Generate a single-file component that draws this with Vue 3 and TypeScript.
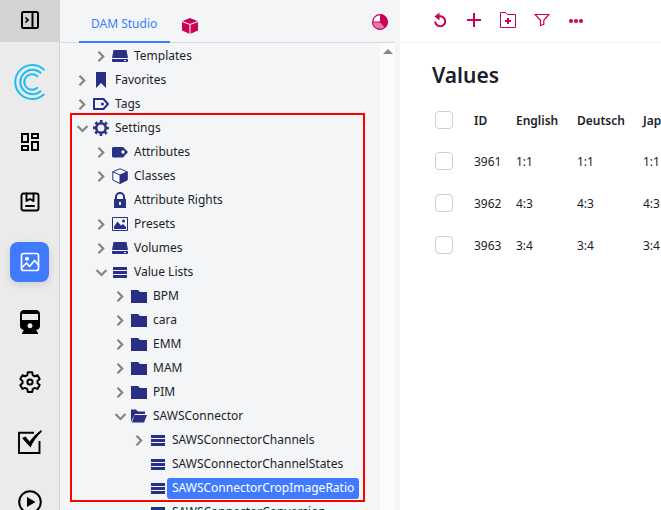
<script setup lang="ts">
import { ref } from 'vue'

interface TreeNode {
  label: string
  level: number
  icon: string
  state: 'open' | 'closed' | 'leaf'
}

const nodes: TreeNode[] = [
  { label: 'Templates', level: 1, icon: 'drive', state: 'closed' },
  { label: 'Favorites', level: 0, icon: 'bookmark', state: 'closed' },
  { label: 'Tags', level: 0, icon: 'tag', state: 'closed' },
  { label: 'Settings', level: 0, icon: 'gear', state: 'open' },
  { label: 'Attributes', level: 1, icon: 'tagfill', state: 'closed' },
  { label: 'Classes', level: 1, icon: 'box', state: 'closed' },
  { label: 'Attribute Rights', level: 1, icon: 'lock', state: 'leaf' },
  { label: 'Presets', level: 1, icon: 'image', state: 'closed' },
  { label: 'Volumes', level: 1, icon: 'drive', state: 'closed' },
  { label: 'Value Lists', level: 1, icon: 'list', state: 'open' },
  { label: 'BPM', level: 2, icon: 'folder', state: 'closed' },
  { label: 'cara', level: 2, icon: 'folder', state: 'closed' },
  { label: 'EMM', level: 2, icon: 'folder', state: 'closed' },
  { label: 'MAM', level: 2, icon: 'folder', state: 'closed' },
  { label: 'PIM', level: 2, icon: 'folder', state: 'closed' },
  { label: 'SAWSConnector', level: 2, icon: 'folderopen', state: 'open' },
  { label: 'SAWSConnectorChannels', level: 3, icon: 'list', state: 'closed' },
  { label: 'SAWSConnectorChannelStates', level: 3, icon: 'list', state: 'leaf' },
  { label: 'SAWSConnectorCropImageRatio', level: 3, icon: 'list', state: 'leaf' },
  { label: 'SAWSConnectorConversion', level: 3, icon: 'list', state: 'leaf' },
]

const selected = ref('SAWSConnectorCropImageRatio')

const rows = [
  { id: 3961, value: '1:1' },
  { id: 3962, value: '4:3' },
  { id: 3963, value: '3:4' },
]
const checked = ref<number[]>([])
</script>

<template>
  <div class="app">
    <nav class="rail" aria-label="Applications">
      <button class="rail-toggle" aria-label="Toggle sidebar">
        <svg width="20" height="20" viewBox="0 0 20 20" fill="none" stroke="#000" stroke-width="2">
          <rect x="2" y="2" width="16" height="16" rx="1.5" />
          <path d="M12.5 2v16" /><path d="M5.500 7.500L8 10l-2.500 2.500" stroke-width="1.700" />
        </svg>
      </button>
      <a href="#" class="rail-item" aria-label="Home">
        <svg width="40" height="40" viewBox="0 0 40 40" fill="none" stroke="#1cbcf4" stroke-width="2" stroke-linecap="round">
          <path d="M33.800 32.500A17 17 0 1 1 33.800 7.500" />
          <path d="M30.500 29.200A12.200 12.200 0 1 1 30.500 10.800" />
          <path d="M27.300 25.800A7.800 7.800 0 1 1 27.300 14.200" />
        </svg>
      </a>
      <a href="#" class="rail-item" aria-label="Dashboard">
        <svg width="20" height="20" viewBox="0 0 20 20" fill="none" stroke="#000" stroke-width="2">
          <path d="M2 2h6v8H2zM12 2h6v4h-6zM2 14h6v4H2zM12 10h6v8h-6z" />
        </svg>
      </a>
      <a href="#" class="rail-item" aria-label="Catalog">
        <svg width="20" height="20" viewBox="0 0 20 20" fill="none" stroke="#000" stroke-width="1.900" stroke-linejoin="round">
          <rect x="1.500" y="1.500" width="17" height="17" rx="2" />
          <path d="M6.500 1.500v7.500L10 7l3.500 2V1.500M6 14h8" stroke-linecap="round" />
        </svg>
      </a>
      <a href="#" class="rail-item" aria-label="Media">
        <span class="rail-active">
          <svg width="20" height="20" viewBox="0 0 20 20" fill="none" stroke="#fff" stroke-width="1.700" stroke-linejoin="round" stroke-linecap="round">
            <rect x="1.500" y="1.500" width="17" height="17" rx="2" />
            <path d="M1.500 16l5-5 3 3.500 5-6 4 4.500" />
            <circle cx="7" cy="6.800" r="1.200" fill="#fff" />
          </svg>
        </span>
      </a>
      <a href="#" class="rail-item" aria-label="Transport">
        <svg width="22" height="24" viewBox="0 0 22 24">
          <path fill-rule="evenodd" d="M4 0h14q3 1 3 4v12q0 3-4 4l2 3v1H3v-1l2-3q-4-1-4-4V4q0-3 3-4zM3 4v6h16V4zM11 13.200a2.500 2.500 0 1 0 .01 0z" />
        </svg>
      </a>
      <a href="#" class="rail-item" aria-label="Settings">
        <svg width="24" height="24" viewBox="0 0 24 24" fill="none" stroke="#000" stroke-width="2" stroke-linejoin="round">
          <path d="M9.800 2.200h4.400l.5 2.900 2.100 1.200 2.700-1 2.200 3.800-2.200 1.800v2.400l2.200 1.800-2.200 3.800-2.700-1-2.100 1.200-.5 2.900H9.800l-.5-2.900-2.100-1.200-2.700 1-2.200-3.800 2.200-1.800v-2.400L2.300 9.100l2.200-3.800 2.700 1 2.100-1.200z" />
          <circle cx="12" cy="12" r="2.600" />
        </svg>
      </a>
      <a href="#" class="rail-item" aria-label="Tasks">
        <svg width="24" height="24" viewBox="0 0 24 24">
          <path d="M16 2.800H1V23h20.500V11" fill="none" stroke="#000" stroke-width="1.900" />
          <path d="M4 8l3.500-1.500 4 5Q16 5 23 0l1 1.500Q16 9 12.500 17.500z" />
        </svg>
      </a>
      <a href="#" class="rail-item" aria-label="Play">
        <svg width="24" height="24" viewBox="0 0 24 24">
          <circle cx="12" cy="12" r="10.800" fill="none" stroke="#000" stroke-width="2" />
          <path d="M9 7l8.500 5L9 17z" />
        </svg>
      </a>
    </nav>

    <aside class="panel">
      <header class="tabs">
        <button class="tab active">DAM Studio</button>
        <button class="tab-icon" aria-label="Packages">
          <svg width="18" height="18" viewBox="0 0 18 18">
            <path d="M9 1l8 3.200v9.300L9 17l-8-3.500V4.200z" fill="#cb0057" />
            <path d="M1 4.500l8 3 8-3M9 7.500V17" fill="none" stroke="#f3f5f7" stroke-width="1.100" />
          </svg>
        </button>
        <button class="tab-icon end" aria-label="Statistics">
          <svg width="16" height="16" viewBox="0 0 16 16">
            <circle cx="8" cy="8" r="7.300" fill="#fff" stroke="#cb0057" stroke-width="1.200" />
            <path d="M8 8H.7a7.300 7.300 0 0 0 12.300 5.300z" fill="#e27bad" stroke="#cb0057" />
            <path d="M8 8V.2a7.800 7.800 0 0 1 5.500 13.300z" fill="#cb0057" />
          </svg>
        </button>
      </header>

      <div class="tree-area">
        <ul class="tree" role="tree">
          <li v-for="n in nodes" :key="n.label" role="treeitem" class="node" :class="'level-' + n.level">
            <span class="arrow">
              <svg v-if="n.state !== 'leaf'" width="14" height="14" viewBox="0 0 14 14" fill="none" stroke="#858585" stroke-width="2.200">
                <path v-if="n.state === 'closed'" d="M3.500 2.800l4.700 4.700-4.700 4.700" />
                <path v-else d="M1.500 5l5 5 5-5" />
              </svg>
            </span>
            <span class="icon">
              <svg width="16" height="16" viewBox="0 0 16 16" fill="#292f83">
                <template v-if="n.icon === 'drive'">
                  <path d="M1.500 2h13L16 10H0zM0 11h16v2q0 1-1 1H1q-1 0-1-1z" />
                  <path d="M12 12h2v1h-2z" fill="#fff" />
                </template>
                <path v-else-if="n.icon === 'bookmark'" d="M3 0h10v16l-5-5-5 5z" />
                <template v-else-if="n.icon === 'tag'">
                  <path d="M1 3h9.500l4.500 5-4.500 5H1z" fill="none" stroke="#292f83" stroke-width="2" stroke-linejoin="round" />
                  <circle cx="9.500" cy="8" r="1.500" />
                </template>
                <g v-else-if="n.icon === 'gear'" fill="none" stroke="#292f83">
                  <circle cx="8" cy="8" r="4.800" stroke-width="2.600" />
                  <circle cx="8" cy="8" r="6.800" stroke-width="2.400" stroke-dasharray="2.670 2.670" stroke-dashoffset="1.330" />
                </g>
                <path v-else-if="n.icon === 'tagfill'" fill-rule="evenodd" d="M1 3h10l5 5-5 5.500H1l-1-1V4zM11 6.300a1.700 1.700 0 1 0 .01 0z" />
                <template v-else-if="n.icon === 'box'">
                  <path d="M8 .8l7.200 3v8.200L8 15.500.8 12V3.800zM.8 3.800L8 7l7.200-3.200M8 7v8.500" fill="#fff" stroke="#292f83" stroke-linejoin="round" />
                  <path d="M8 7l7.500-3.200V12L8 15.500z" />
                </template>
                <path v-else-if="n.icon === 'lock'" fill-rule="evenodd" d="M3 7V5a5 5 0 0 1 10 0v2h1v9H2V7zM5 7h6V5a3 3 0 0 0-6 0zM7 10v3h2v-3z" />
                <template v-else-if="n.icon === 'image'">
                  <path d="M.5 1.500h15v13H.5z" fill="none" stroke="#292f83" />
                  <path d="M2 13v-2.500L5.500 5.500 9 9.500l2-1.500 3 3V13z" />
                  <circle cx="11.500" cy="5" r="1.500" />
                </template>
                <path v-else-if="n.icon === 'list'" d="M1 3h14v3H1zM1 7h14v3H1zM1 11h14v3H1z" />
                <path v-else-if="n.icon === 'folder'" d="M0 2h7l2 2h7v11H0z" />
                <template v-else>
                  <path d="M0 1.500h5l2 2h7V6H4L0 14z" />
                  <path d="M3.500 7H16l-3 7.500H1z" />
                </template>
              </svg>
            </span>
            <button class="label" :class="{ selected: selected === n.label }" @click="selected = n.label">{{ n.label }}</button>
          </li>
        </ul>
        <div class="scrollbar">
          <button class="scroll-up" aria-label="Scroll up">
            <svg width="10" height="6" viewBox="0 0 10 6"><path d="M5 0l5 5H0z" fill="#858585" /></svg>
          </button>
        </div>
        <div class="highlight"></div>
      </div>
    </aside>

    <main class="main">
      <div class="toolbar">
        <button class="tool" aria-label="Refresh">
          <svg width="16" height="18" viewBox="0 0 16 18">
            <path d="M7 5.500A5 5 0 1 1 3.200 10.500" fill="none" stroke="#cb0057" stroke-width="2" />
            <path d="M7.500 1.500v8L2.500 5.500z" fill="#cb0057" />
          </svg>
        </button>
        <button class="tool" aria-label="Add">
          <svg width="16" height="16" viewBox="0 0 16 16"><path d="M8 1v14M1 8h14" stroke="#cb0057" stroke-width="2" /></svg>
        </button>
        <button class="tool" aria-label="Add folder">
          <svg width="16" height="16" viewBox="0 0 16 16" fill="none" stroke="#cb0057">
            <path d="M.5.5h5l2 2h8v13H.5z" /><path d="M8 6v6M5 9h6" stroke-width="2" />
          </svg>
        </button>
        <button class="tool" aria-label="Filter">
          <svg width="16" height="16" viewBox="0 0 16 16" fill="none" stroke="#cb0057" stroke-width="1.200">
            <path d="M1 2.500h14L9.800 8.300v4L6.500 13.500V8.300z" />
          </svg>
        </button>
        <button class="tool" aria-label="More">
          <svg width="16" height="16" viewBox="0 0 16 16" fill="#cb0057">
            <circle cx="3" cy="9" r="2" /><circle cx="8" cy="9" r="2" /><circle cx="13" cy="9" r="2" />
          </svg>
        </button>
      </div>
      <h1 class="title">Values</h1>
      <table class="values">
        <thead>
          <tr>
            <th class="col-check"><input type="checkbox" aria-label="Select all" /></th>
            <th class="col-id">ID</th>
            <th class="col-en">English</th>
            <th class="col-de">Deutsch</th>
            <th>Japanese</th>
          </tr>
        </thead>
        <tbody>
          <tr v-for="r in rows" :key="r.id">
            <td><input v-model="checked" type="checkbox" :value="r.id" :aria-label="'Select ' + r.id" /></td>
            <td>{{ r.id }}</td>
            <td>{{ r.value }}</td>
            <td>{{ r.value }}</td>
            <td>{{ r.value }}</td>
          </tr>
        </tbody>
      </table>
    </main>
  </div>
</template>

<style>
body {
  margin: 0;
  overflow: hidden;
}
</style>

<style scoped>
.app {
  display: flex;
  height: 100vh;
  overflow: hidden;
  font-family: 'Noto Sans', sans-serif;
  font-size: 12px;
  color: #1b1d29;
  background: #fff;
}
button {
  margin: 0;
  padding: 0;
  border: 0;
  background: none;
  font: inherit;
  color: inherit;
  cursor: pointer;
}
svg {
  display: block;
  flex: none;
}
.rail {
  flex: none;
  width: 59px;
  background: #ebebeb;
  border-right: 1px solid #d0d2d6;
  overflow: hidden;
}
.rail-toggle {
  display: flex;
  align-items: center;
  justify-content: center;
  width: 100%;
  height: 42px;
  margin-bottom: 10px;
  padding-bottom: 2px;
  background: #d3d3d3;
}
.rail-item {
  display: flex;
  align-items: center;
  justify-content: center;
  height: 60px;
}
.rail-active {
  display: flex;
  align-items: center;
  justify-content: center;
  width: 39px;
  height: 40px;
  border-radius: 8px;
  background: #407bff;
  box-shadow: 0 3px 8px rgba(0, 0, 0, 0.12);
}
.panel {
  flex: none;
  display: flex;
  flex-direction: column;
  width: 335px;
  padding-right: 5px;
  background: #f3f5f7;
}
.tabs {
  flex: none;
  display: flex;
  align-items: stretch;
  height: 42px;
  padding: 0 7px 0 19px;
  border-bottom: 1px solid #d9dbdf;
}
.tab {
  padding: 6px 13px 0 12px;
  margin-bottom: -1px;
  border-bottom: 2px solid transparent;
}
.tab.active {
  color: #407bff;
  border-bottom-color: #407bff;
}
.tab-icon {
  display: flex;
  align-items: center;
  margin-left: 11px;
  padding-top: 10px;
}
.tab-icon.end {
  margin-left: auto;
  padding-top: 2px;
}
.tree-area {
  position: relative;
  flex: 1;
  min-height: 0;
  display: flex;
  overflow: hidden;
}
.tree {
  flex: 1;
  margin: 0;
  padding: 1px 0 0 13px;
  list-style: none;
  overflow: hidden;
}
.node {
  display: flex;
  align-items: center;
  height: 24px;
}
.level-1 {
  padding-left: 19px;
}
.level-2 {
  padding-left: 38px;
}
.level-3 {
  padding-left: 57px;
}
.arrow,
.icon {
  flex: none;
  display: flex;
  justify-content: center;
}
.arrow {
  width: 19px;
}
.icon {
  width: 18px;
}
.label {
  height: 21px;
  padding: 0 5px;
  border-radius: 3px;
  line-height: 20px;
  white-space: nowrap;
}
.label.selected {
  color: #fff;
  background: #407bff;
}
.scrollbar {
  flex: none;
  width: 15px;
  background: #fcfcfc;
}
.scroll-up {
  display: flex;
  align-items: center;
  justify-content: center;
  width: 100%;
  height: 17px;
}
.highlight {
  position: absolute;
  top: 70px;
  left: 10px;
  right: 30px;
  height: 385px;
  border: 2px solid #f00;
  pointer-events: none;
}
.main {
  flex: 1;
  min-width: 0;
  overflow: hidden;
}
.toolbar {
  display: flex;
  align-items: center;
  gap: 18px;
  height: 40px;
  padding: 0 32px;
  border-bottom: 1px solid #f1f2f4;
  padding-bottom: 2px;
}
.title {
  margin: 18px 32px 11px;
  font-size: 21px;
  line-height: 28px;
  font-weight: 600;
}
.values {
  table-layout: fixed;
  width: 320px;
  margin-left: 32px;
  border-collapse: collapse;
}
.values th,
.values td {
  height: 42px;
  padding: 0;
  text-align: left;
  white-space: nowrap;
}
.values th {
  height: 40px;
  font-weight: 600;
}
.col-check,
.col-id {
  width: 42px;
}
.col-en {
  width: 61px;
}
.col-de {
  width: 66px;
}
input[type='checkbox'] {
  appearance: none;
  display: block;
  box-sizing: border-box;
  width: 18px;
  height: 18px;
  margin: 0 0 0 3px;
  border: 1px solid #cdced6;
  border-radius: 4px;
  background: #fff;
}
input[type='checkbox']:checked {
  background: #407bff;
}
</style>
